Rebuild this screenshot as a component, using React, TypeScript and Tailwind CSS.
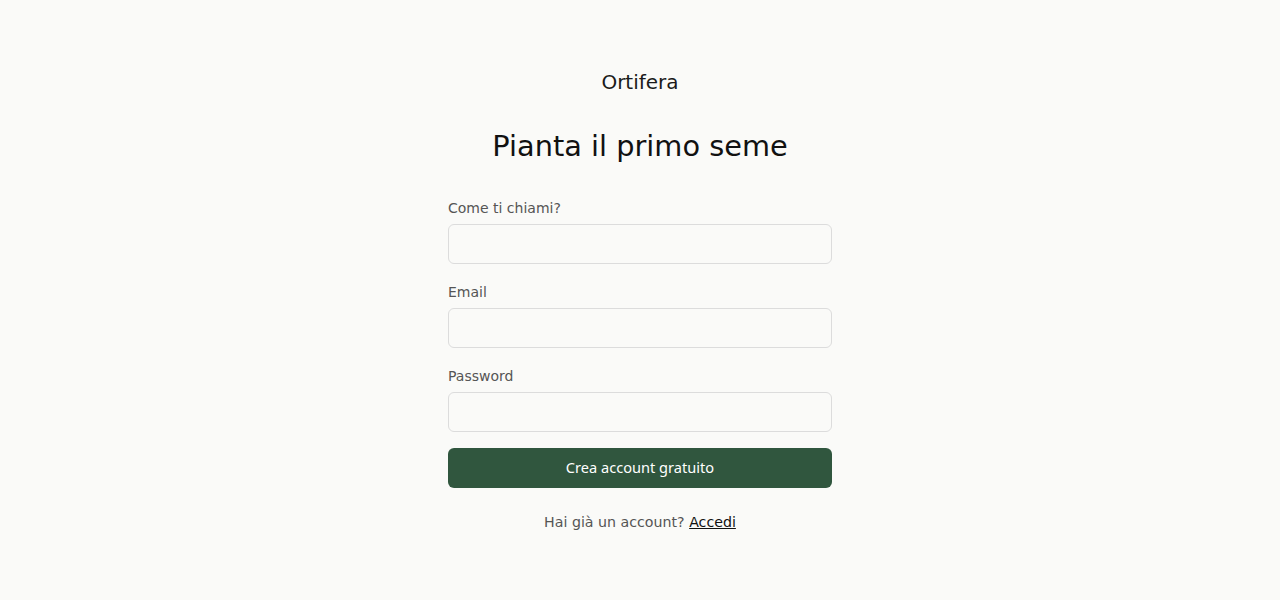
export default function App() {
  const fields = ["Come ti chiami?", "Email", "Password"];
  return (
    <div
      className="min-h-[600px] w-full bg-[#fafaf8] pt-[68px] text-[#1a1a1a]"
      style={{ fontFamily: '"DejaVu Sans", sans-serif' }}
    >
      <div className="mx-auto w-[384px]">
        <div className="text-center text-xl leading-7 text-[#1a1a1a]">Ortifera</div>
        <h1 className="mt-8 text-center text-[28.8px] leading-9 text-[#111]">Pianta il primo seme</h1>
        <form className="mt-8 flex flex-col gap-4" onSubmit={(e) => e.preventDefault()}>
          {fields.map((f) => (
            <div key={f} className="flex flex-col">
              <label className="mb-1 text-sm leading-6 text-[#555]">{f}</label>
              <input
                type={f === "Password" ? "password" : f === "Email" ? "email" : "text"}
                className="h-10 rounded-md border border-[#dcdcdc] bg-[#fafaf8] px-3 text-sm outline-none"
              />
            </div>
          ))}
          <button
            type="submit"
            className="h-10 rounded-md bg-[#30563e] text-[14.6px] font-normal text-white"
            style={{ fontFamily: '"Noto Sans", sans-serif' }}
          >
            Crea account gratuito
          </button>
        </form>
        <p className="mt-6 text-center text-[14.2px] leading-5 text-[#555]">
          Hai già un account?{" "}
          <a href="#" className="text-[#111] underline">
            Accedi
          </a>
        </p>
      </div>
    </div>
  );
}
